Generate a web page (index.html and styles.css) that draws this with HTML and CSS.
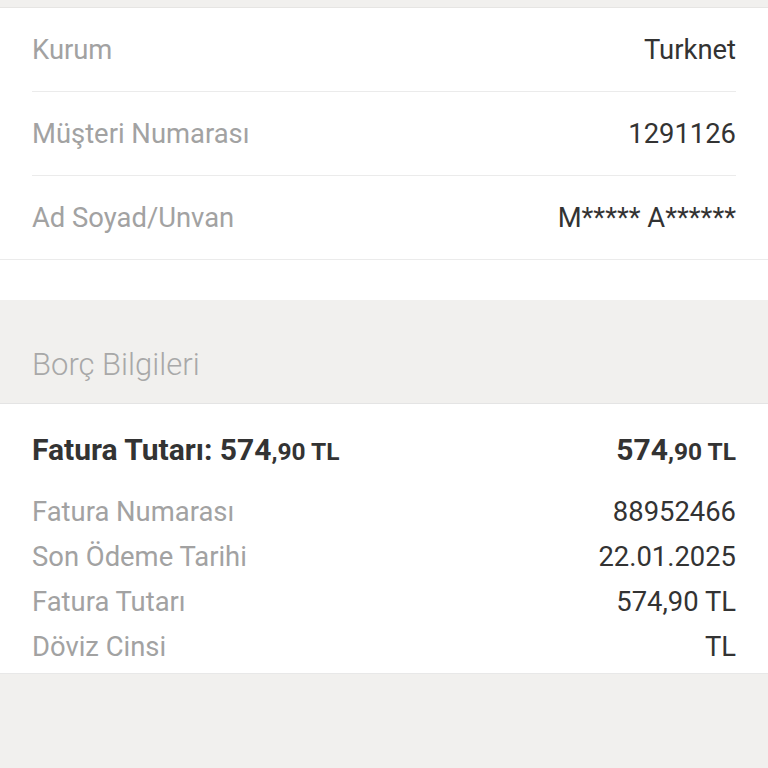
FILE: index.html
```html
<!DOCTYPE html>
<html lang="tr">
<head>
    <meta charset="UTF-8">
    <meta name="viewport" content="width=device-width, initial-scale=1.0">
    <title>Fatura Detayı</title>
    <link rel="stylesheet" href="styles.css">
</head>
<body>
    <div class="top-band"></div>

    <div class="card">
        <div class="info-list">
            <div class="info-row">
                <span class="label">Kurum</span>
                <span class="value">Turknet</span>
            </div>
            <div class="info-row">
                <span class="label">Müşteri Numarası</span>
                <span class="value">1291126</span>
            </div>
            <div class="info-row">
                <span class="label">Ad Soyad/Unvan</span>
                <span class="value">M***** A******</span>
            </div>
        </div>
    </div>

    <div class="section-title">Borç Bilgileri</div>

    <div class="bill">
        <div class="bill-total">
            <span>Fatura Tutarı: 574<small>,90 TL</small></span>
            <span>574<small>,90 TL</small></span>
        </div>
        <div class="bill-row">
            <span class="label">Fatura Numarası</span>
            <span class="value">88952466</span>
        </div>
        <div class="bill-row">
            <span class="label">Son Ödeme Tarihi</span>
            <span class="value">22.01.2025</span>
        </div>
        <div class="bill-row">
            <span class="label">Fatura Tutarı</span>
            <span class="value">574,90 TL</span>
        </div>
        <div class="bill-row">
            <span class="label">Döviz Cinsi</span>
            <span class="value">TL</span>
        </div>
    </div>
</body>
</html>
```

FILE: styles.css
```css
body {
    margin: 0;
    background: #f1f0ee;
    font-family: Roboto, "Noto Sans", sans-serif;
    font-size: 27.4px;
    min-height: 100vh;
}
.top-band {
    height: 7px;
    border-bottom: 1px solid #e6e5e3;
}
.card {
    background: #fff;
    padding-bottom: 40px;
}
.info-list {
    border-bottom: 1px solid #ebebeb;
}
.info-row {
    display: flex;
    justify-content: space-between;
    align-items: center;
    height: 83px;
    margin: 0 32px;
    border-bottom: 1px solid #ebebeb;
}
.info-row:last-child {
    border-bottom: none;
}
.label {
    color: #a2a2a2;
}
.value {
    color: #333;
}
.section-title {
    height: 104px;
    box-sizing: border-box;
    display: flex;
    align-items: flex-end;
    padding: 0 32px 22px;
    line-height: 32px;
    font-size: 31px;
    color: #a8a8a8;
    font-weight: 300;
    border-bottom: 1px solid #e4e4e4;
}
.bill {
    background: #fff;
    padding: 26px 32px 3px;
    border-bottom: 1px solid #e8e8e8;
}
.bill-total {
    display: flex;
    justify-content: space-between;
    line-height: 40px;
    font-size: 30px;
    font-weight: 700;
    color: #333;
    margin-bottom: 18px;
}
.bill-total small {
    font-size: 24.5px;
}
.bill-row {
    display: flex;
    justify-content: space-between;
    line-height: 45px;
}
```
